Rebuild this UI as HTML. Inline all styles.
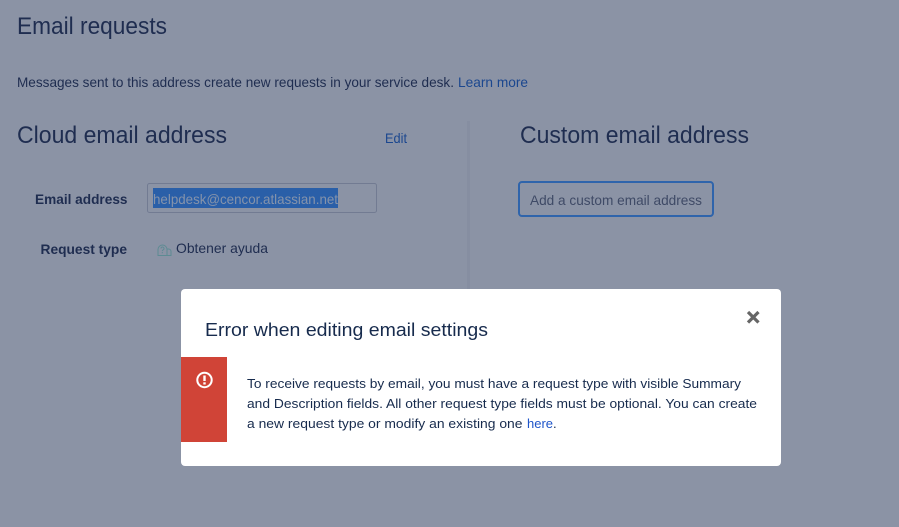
<!DOCTYPE html>
<html lang="en">
<head>
<meta charset="utf-8">
<title>Email requests</title>
<style>
html,body{margin:0;padding:0;background:#8b93a5;width:899px;height:527px;overflow:hidden}
svg{display:block}
text{font-family:"Liberation Sans",sans-serif;white-space:pre}
</style>
</head>
<body>
<svg width="899" height="527" viewBox="0 0 899 527" xmlns="http://www.w3.org/2000/svg">
<rect width="899" height="527" fill="#8b93a5"/>
<g fill="#1f2d50">
<text x="17" y="34" font-size="24" textLength="150" lengthAdjust="spacingAndGlyphs">Email requests</text>
<text x="17" y="87" font-size="14" textLength="437" lengthAdjust="spacingAndGlyphs">Messages sent to this address create new requests in your service desk.</text>
<text x="458" y="87" font-size="14" fill="#1b478f" textLength="70" lengthAdjust="spacingAndGlyphs">Learn more</text>
<text x="17" y="143" font-size="24" textLength="210" lengthAdjust="spacingAndGlyphs">Cloud email address</text>
<text x="385" y="143" font-size="14" fill="#1b478f" textLength="22" lengthAdjust="spacingAndGlyphs">Edit</text>
<text x="35" y="204" font-size="14" font-weight="700" textLength="92.500" lengthAdjust="spacingAndGlyphs">Email address</text>
<text x="40.500" y="254" font-size="14" font-weight="700" textLength="86.500" lengthAdjust="spacingAndGlyphs">Request type</text>
<text x="176" y="253" font-size="14" textLength="92" lengthAdjust="spacingAndGlyphs">Obtener ayuda</text>
<text x="520" y="143" font-size="24" textLength="229" lengthAdjust="spacingAndGlyphs">Custom email address</text>
</g>

<rect x="147.500" y="183.500" width="229" height="29" rx="2" fill="#8b93a5" stroke="#727b92"/>
<rect x="153" y="188" width="185" height="20" fill="#2a5fa8"/>
<text x="153" y="204" font-size="14" fill="#8593ab" textLength="185" lengthAdjust="spacingAndGlyphs">helpdesk@cencor.atlassian.net</text>

<g fill="none" stroke="#5d8b93" stroke-width="1">
<path d="M158 255.500h9v-6a4.500 4.500 0 0 0-9 0z"/>
<path d="M167 249h1.500a2.500 2.500 0 0 1 2.500 2.500v4h-4"/>
<path d="M161 248.500a1.500 1.500 0 1 1 2.200 1.300c-.7.400-.9.800-.9 1.300M162.300 252v1.200"/>
</g>

<rect x="467" y="121" width="3" height="169" fill="#868ea1"/>

<rect x="519" y="182" width="194" height="34" rx="3" fill="#8b93a5" stroke="#2f64ab" stroke-width="2"/>
<text x="530" y="205" font-size="14" fill="#3f4a66" textLength="172" lengthAdjust="spacingAndGlyphs">Add a custom email address</text>

<path d="M185 289h592a4 4 0 0 1 4 4v169a4 4 0 0 1-4 4H185a4 4 0 0 1-4-4V293a4 4 0 0 1 4-4z" fill="#fff"/>
<text x="205" y="336" font-size="18" fill="#172b4d" textLength="283" lengthAdjust="spacingAndGlyphs">Error when editing email settings</text>
<path d="M748 312l10.500 10.500M758.500 312L748 322.500" stroke="#666" stroke-width="3.200" fill="none"/>

<rect x="181" y="357" width="46" height="85" fill="#d04437"/>
<circle cx="204.500" cy="380" r="7.200" fill="none" stroke="#fff" stroke-width="2"/>
<rect x="203.300" y="375.500" width="2.400" height="5.500" fill="#fff"/>
<rect x="203.300" y="382.300" width="2.400" height="2.200" fill="#fff"/>

<g font-size="13" fill="#172b4d">
<text x="247" y="388" textLength="494" lengthAdjust="spacingAndGlyphs">To receive requests by email, you must have a request type with visible Summary</text>
<text x="247" y="408" textLength="510" lengthAdjust="spacingAndGlyphs">and Description fields. All other request type fields must be optional. You can create</text>
<text x="247" y="428" textLength="275.500" lengthAdjust="spacingAndGlyphs">a new request type or modify an existing one</text>
<text x="527" y="428" fill="#1f55c9" textLength="26" lengthAdjust="spacingAndGlyphs">here</text>
<text x="553" y="428">.</text>
</g>
</svg>
</body>
</html>
